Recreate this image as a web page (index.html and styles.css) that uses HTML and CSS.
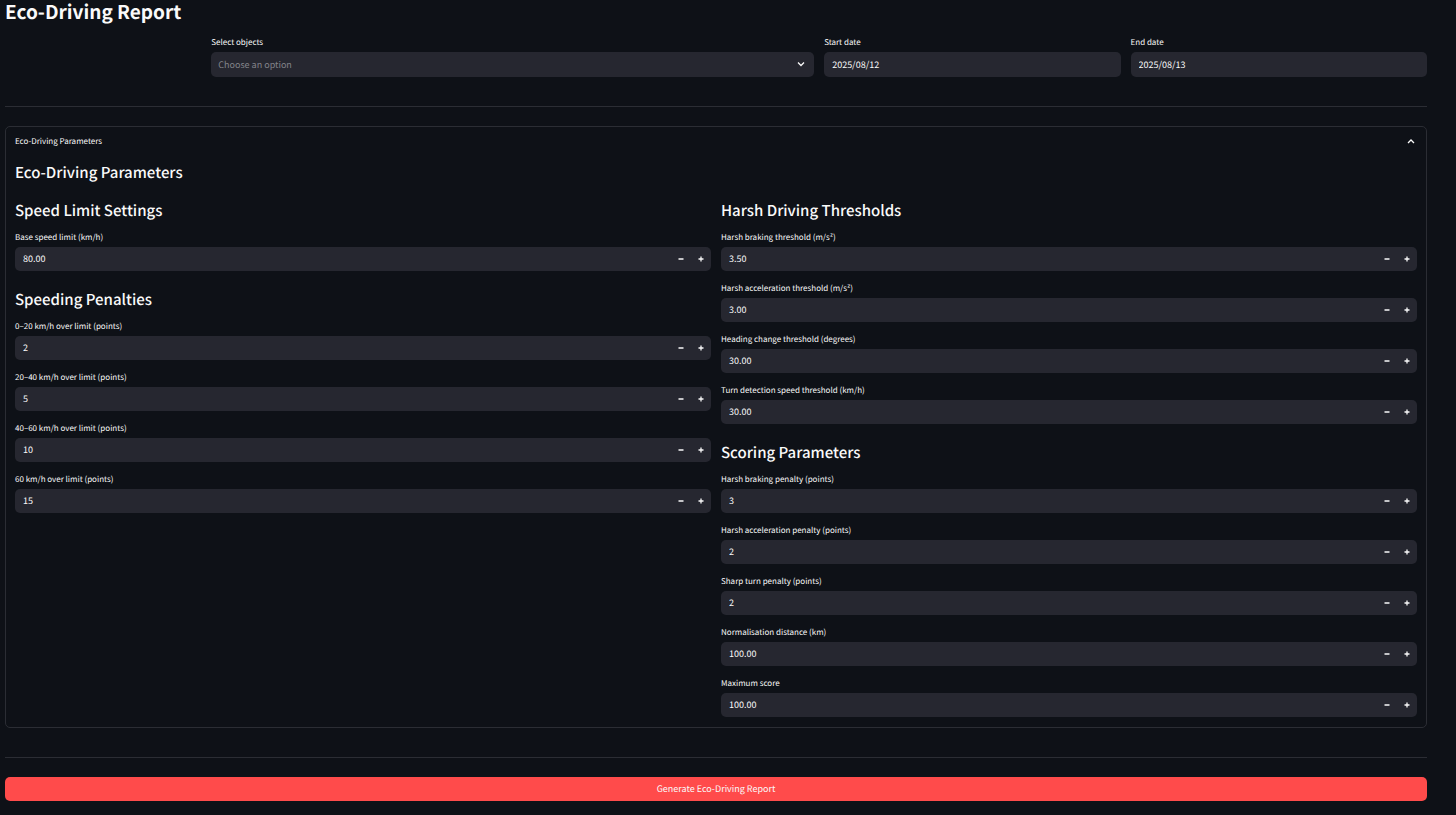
FILE: index.html
```html
<!DOCTYPE html>
<html lang="en">
<head>
<meta charset="utf-8">
<meta name="viewport" content="width=device-width, initial-scale=1">
<title>Eco-Driving Report</title>
<link rel="stylesheet" href="styles.css">
</head>
<body>
<main class="page">
  <h1 class="title">Eco-Driving Report</h1>

  <form class="report">
    <div class="filters">
      <div class="field filter-objects">
        <label for="objects">Select objects</label>
        <div class="select-wrap">
          <select id="objects" class="control">
            <option value="" selected>Choose an option</option>
          </select>
          <svg class="select-arrow" viewBox="0 0 10 10" aria-hidden="true"><path d="M2 3.5 5 6.5 8 3.5"/></svg>
        </div>
      </div>
      <div class="field">
        <label for="start">Start date</label>
        <input id="start" class="control" type="text" value="2025/08/12">
      </div>
      <div class="field">
        <label for="end">End date</label>
        <input id="end" class="control" type="text" value="2025/08/13">
      </div>
    </div>

    <hr class="divider">

    <details class="expander" open>
      <summary>
        <span>Eco-Driving Parameters</span>
        <svg class="chevron" viewBox="0 0 10 10" aria-hidden="true"><path d="M2 6 5 3 8 6"/></svg>
      </summary>
      <div class="expander-body">
        <h2 class="heading">Eco-Driving Parameters</h2>
        <div class="columns">
          <div class="column">
            <section class="group">
              <h3 class="heading">Speed Limit Settings</h3>
              <div class="fields">
                <div class="field"><label for="base">Base speed limit (km/h)</label><div class="stepper"><input id="base" type="number" step="0.01" value="80.00"></div></div>
              </div>
            </section>
            <section class="group">
              <h3 class="heading">Speeding Penalties</h3>
              <div class="fields">
                <div class="field"><label for="p20">0–20 km/h over limit (points)</label><div class="stepper"><input id="p20" type="number" value="2"></div></div>
                <div class="field"><label for="p40">20–40 km/h over limit (points)</label><div class="stepper"><input id="p40" type="number" value="5"></div></div>
                <div class="field"><label for="p60">40–60 km/h over limit (points)</label><div class="stepper"><input id="p60" type="number" value="10"></div></div>
                <div class="field"><label for="p60plus">60 km/h over limit (points)</label><div class="stepper"><input id="p60plus" type="number" value="15"></div></div>
              </div>
            </section>
          </div>
          <div class="column">
            <section class="group">
              <h3 class="heading">Harsh Driving Thresholds</h3>
              <div class="fields">
                <div class="field"><label for="brake">Harsh braking threshold (m/s²)</label><div class="stepper"><input id="brake" type="number" step="0.01" value="3.50"></div></div>
                <div class="field"><label for="accel">Harsh acceleration threshold (m/s²)</label><div class="stepper"><input id="accel" type="number" step="0.01" value="3.00"></div></div>
                <div class="field"><label for="turn">Heading change threshold (degrees)</label><div class="stepper"><input id="turn" type="number" step="0.01" value="30.00"></div></div>
                <div class="field"><label for="turnspeed">Turn detection speed threshold (km/h)</label><div class="stepper"><input id="turnspeed" type="number" step="0.01" value="30.00"></div></div>
              </div>
            </section>
            <section class="group">
              <h3 class="heading">Scoring Parameters</h3>
              <div class="fields">
                <div class="field"><label for="sbrake">Harsh braking penalty (points)</label><div class="stepper"><input id="sbrake" type="number" value="3"></div></div>
                <div class="field"><label for="saccel">Harsh acceleration penalty (points)</label><div class="stepper"><input id="saccel" type="number" value="2"></div></div>
                <div class="field"><label for="sturn">Sharp turn penalty (points)</label><div class="stepper"><input id="sturn" type="number" value="2"></div></div>
                <div class="field"><label for="norm">Normalisation distance (km)</label><div class="stepper"><input id="norm" type="number" step="0.01" value="100.00"></div></div>
                <div class="field"><label for="max">Maximum score</label><div class="stepper"><input id="max" type="number" step="0.01" value="100.00"></div></div>
              </div>
            </section>
          </div>
        </div>
      </div>
    </details>

    <hr class="divider">

    <button class="submit" type="button">Generate Eco-Driving Report</button>
  </form>
</main>
<script src="steppers.js"></script>
</body>
</html>
```

FILE: styles.css
```css
* {
  box-sizing: border-box;
}

body {
  margin: 0;
  background: #0e1117;
  color: #fafafa;
  font-family: "Noto Sans CJK SC", "Noto Sans", sans-serif;
  font-size: 8px;
  line-height: 12px;
  text-rendering: geometricPrecision;
}

input,
select,
button {
  font: inherit;
  color: inherit;
  text-rendering: inherit;
}

.page {
  padding: 0 29px 14px 5px;
}

.title {
  margin: 0;
  font-size: 19px;
  line-height: 24px;
  font-weight: 700;
}

.filters {
  display: grid;
  grid-template-columns: 196fr 602fr 296fr 296fr;
  gap: 10px;
  padding-top: 13px;
}

.filter-objects {
  grid-column: 2;
}

.field {
  display: flex;
  flex-direction: column;
  gap: 3px;
  min-width: 0;
}

.control {
  display: block;
  width: 100%;
  height: 25px;
  padding: 0 8px;
  border: 0;
  border-radius: 5px;
  background: #262730;
  font-size: 9px;
}

.select-wrap {
  position: relative;
}

select.control {
  appearance: none;
  padding: 0 7px;
  color: #83848a;
}

.select-arrow {
  position: absolute;
  top: 7px;
  right: 8px;
  width: 10px;
  height: 10px;
  pointer-events: none;
}

svg {
  fill: none;
  stroke: #fafafa;
  stroke-width: 1.3;
}

.divider {
  margin: 29px 0 19px;
  border: 0;
  border-top: 1px solid #2b2d34;
}

.expander {
  border: 1px solid #2b2d34;
  border-radius: 5px;
}

.expander summary {
  display: flex;
  align-items: center;
  justify-content: space-between;
  height: 30px;
  padding: 0 10px 0 9px;
  list-style: none;
}

.chevron {
  width: 10px;
  height: 10px;
}

.expander-body {
  padding: 4px 9px 10px;
}

.heading {
  margin: 0;
  font-size: 15px;
  line-height: 24px;
  font-weight: 500;
}

.columns {
  display: grid;
  grid-template-columns: 1fr 1fr;
  gap: 10px;
  margin-top: 14px;
}

.column {
  display: flex;
  flex-direction: column;
  gap: 17px;
  min-width: 0;
}

.fields {
  display: flex;
  flex-direction: column;
  gap: 12px;
  margin-top: 9px;
}

.stepper {
  display: flex;
  height: 24px;
  border-radius: 5px;
  background: #262730;
  overflow: hidden;
}

.stepper input {
  flex: 1;
  min-width: 0;
  padding: 0 8px;
  border: 0;
  background: transparent;
  font-size: 9px;
  appearance: textfield;
}

.stepper input::-webkit-inner-spin-button {
  appearance: none;
  margin: 0;
}

.stepper button {
  display: grid;
  place-items: center;
  width: 20px;
  padding: 0;
  border: 0;
  background: transparent;
}

.stepper svg {
  width: 8px;
  height: 8px;
}

.submit {
  display: block;
  width: 100%;
  height: 24px;
  border: 0;
  border-radius: 5px;
  background: #ff4b4b;
  font-size: 9px;
}
```

FILE: steppers.js
```js
const icons = {
  minus: "M1.5 4H6.5",
  plus: "M1.5 4H6.5M4 1.5V6.5"
};

function addButton(stepper, kind, label, action) {
  const button = document.createElement("button");
  button.type = "button";
  button.setAttribute("aria-label", label);
  button.innerHTML = `<svg viewBox="0 0 8 8" aria-hidden="true"><path d="${icons[kind]}"/></svg>`;
  button.addEventListener("click", action);
  stepper.append(button);
}

document.querySelectorAll(".stepper").forEach((stepper) => {
  const input = stepper.querySelector("input");
  addButton(stepper, "minus", "Decrease", () => input.stepDown());
  addButton(stepper, "plus", "Increase", () => input.stepUp());
});
```
